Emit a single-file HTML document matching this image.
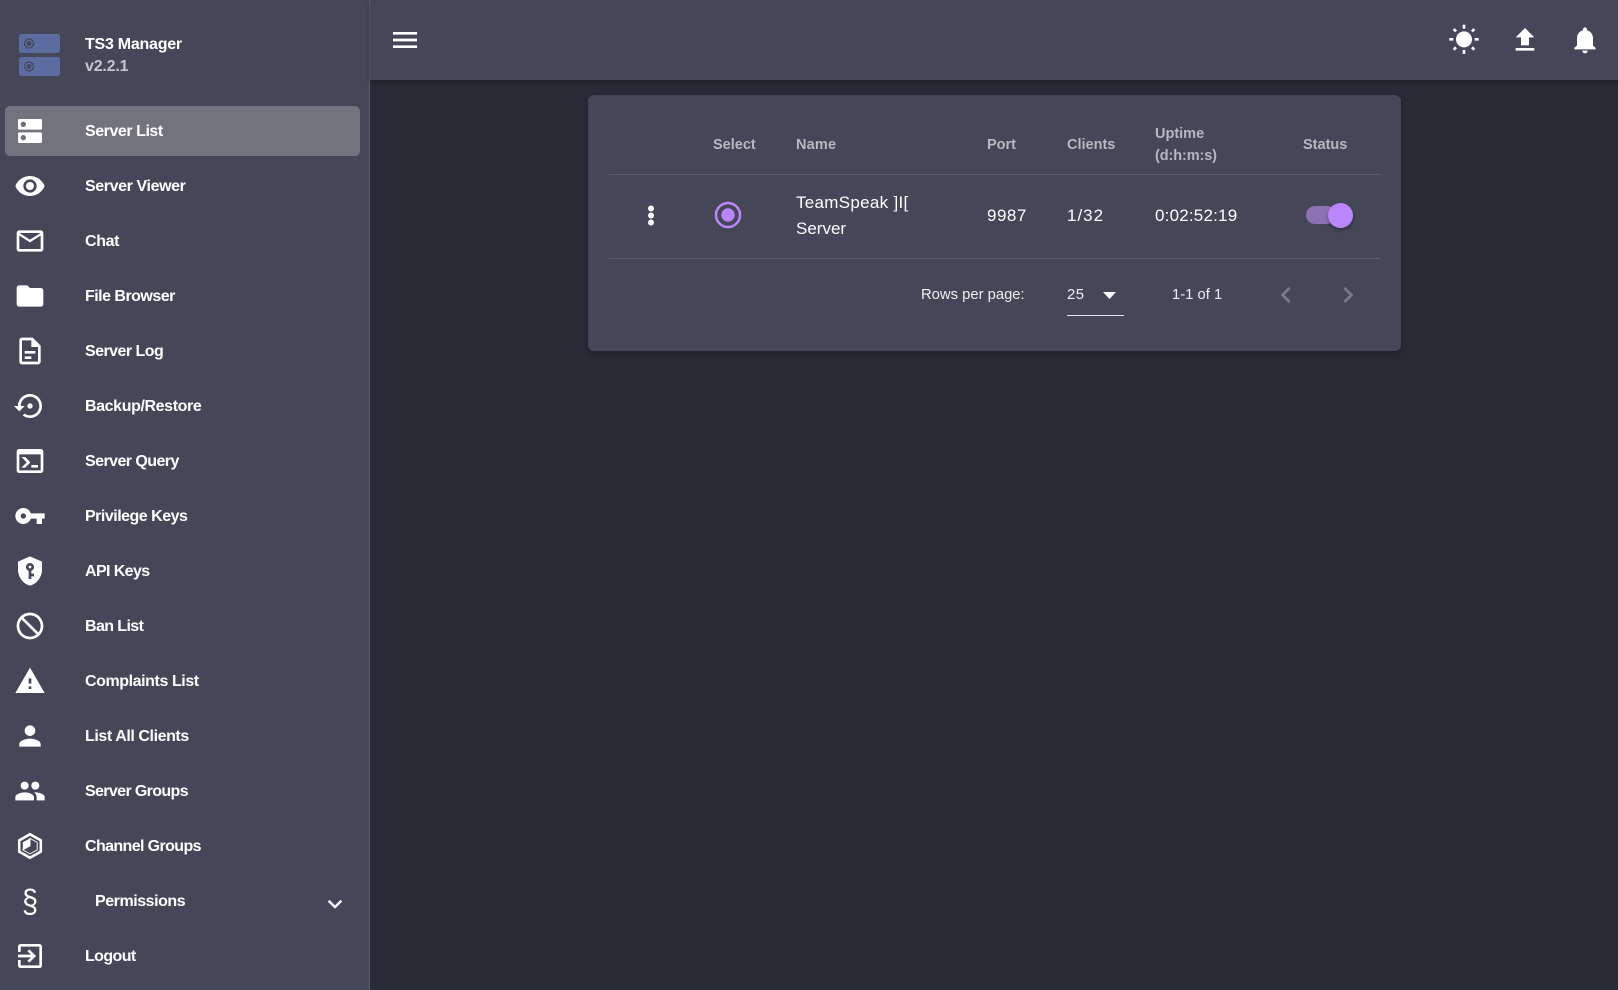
<!DOCTYPE html>
<html><head><meta charset="utf-8"><title>TS3 Manager</title>
<style>
html,body{margin:0;padding:0;width:1618px;height:990px;overflow:hidden;background:#282a36;font-family:"Liberation Sans",sans-serif;color:#fff}
.a{position:absolute;white-space:nowrap}
#side{position:absolute;left:0;top:0;width:369px;height:990px;background:#454759;border-right:1px solid #5a5c6c}
#bar{position:absolute;left:370px;top:0;width:1248px;height:80px;background:#454759;box-shadow:0 2px 4px rgba(0,0,0,.3)}
#sel{position:absolute;left:5px;top:106px;width:355px;height:50px;background:#72737f;border-radius:5px}
.n{position:absolute;left:85px;font-size:16px;font-weight:bold;letter-spacing:-.35px;line-height:20px;height:20px;white-space:nowrap}
svg.i{position:absolute;left:14px;width:32px;height:32px;fill:#fff}
svg.t{position:absolute;width:32px;height:32px;fill:#fff;top:24px}
#card{position:absolute;left:588px;top:95px;width:813px;height:256px;background:#454759;border-radius:6px;box-shadow:0 2px 6px rgba(0,0,0,.28)}
.h{font-size:14.5px;font-weight:bold;color:#b7b8bf;line-height:20px;position:absolute;white-space:nowrap}
.c{font-size:17px;color:#fff;line-height:26px;position:absolute;white-space:nowrap}
.f{font-size:14.8px;color:#eeeef0;line-height:20px;position:absolute;white-space:nowrap}
.l{position:absolute;left:609px;width:772px;height:1px;background:#5b5d6e}
</style></head><body>
<div id="side">
<svg class="a" style="left:19px;top:34px" width="42" height="42" viewBox="0 0 42 42">
<rect x="0" y="0" width="41" height="19" rx="2.5" fill="#5d6ca0"/><rect x="0" y="23" width="41" height="19" rx="2.5" fill="#5d6ca0"/>
<circle cx="10" cy="9.5" r="4.5" fill="none" stroke="#454759" stroke-width="1.2"/><circle cx="10" cy="9.5" r="2.4" fill="#454759"/>
<circle cx="10" cy="32.5" r="4.5" fill="none" stroke="#454759" stroke-width="1.2"/><circle cx="10" cy="32.5" r="2.4" fill="#454759"/></svg>
<div class="n" style="top:35px;letter-spacing:-.25px">TS3 Manager</div>
<div class="n" style="top:57px;color:#c4c5cc;letter-spacing:-.2px">v2.2.1</div>
<div id="sel"></div>

<svg class="i" style="top:115px" viewBox="0 0 24 24"><path d="M20 13H4c-.55 0-1 .45-1 1v6c0 .55.45 1 1 1h16c.55 0 1-.45 1-1v-6c0-.55-.45-1-1-1zM7 19c-1.1 0-2-.9-2-2s.9-2 2-2 2 .9 2 2-.9 2-2 2zM20 3H4c-.55 0-1 .45-1 1v6c0 .55.45 1 1 1h16c.55 0 1-.45 1-1V4c0-.55-.45-1-1-1zM7 9c-1.1 0-2-.9-2-2s.9-2 2-2 2 .9 2 2-.9 2-2 2z"/></svg>
<div class="n" style="top:122px;letter-spacing:-.45px">Server List</div>

<svg class="i" style="top:170px" viewBox="0 0 24 24"><path d="M12 4.5C7 4.5 2.73 7.61 1 12c1.73 4.39 6 7.5 11 7.5s9.27-3.11 11-7.5c-1.73-4.39-6-7.5-11-7.5zM12 17c-2.76 0-5-2.24-5-5s2.24-5 5-5 5 2.24 5 5-2.24 5-5 5zm0-8c-1.66 0-3 1.34-3 3s1.34 3 3 3 3-1.34 3-3-1.34-3-3-3z"/></svg>
<div class="n" style="top:177px;letter-spacing:-.39px">Server Viewer</div>

<svg class="i" style="top:225px" viewBox="0 0 24 24"><path d="M20 4H4c-1.1 0-1.99.9-1.99 2L2 18c0 1.1.9 2 2 2h16c1.1 0 2-.9 2-2V6c0-1.1-.9-2-2-2zm0 14H4V8l8 5 8-5v10zm-8-7L4 6h16l-8 5z"/></svg>
<div class="n" style="top:232px">Chat</div>

<svg class="i" style="top:280px" viewBox="0 0 24 24"><path d="M10 4H4c-1.1 0-1.99.9-1.99 2L2 18c0 1.1.9 2 2 2h16c1.1 0 2-.9 2-2V8c0-1.1-.9-2-2-2h-8l-2-2z"/></svg>
<div class="n" style="top:287px;letter-spacing:-.52px">File Browser</div>

<svg class="i" style="top:335px" viewBox="0 0 24 24"><path d="M14 2H6c-1.1 0-2 .9-2 2v16c0 1.1.89 2 1.99 2H18c1.1 0 2-.9 2-2V8l-6-6zm4 18H6V4h7v5h5v11zM8 12h8v2H8zm0 4h5v2H8z"/></svg>
<div class="n" style="top:342px;letter-spacing:-.54px">Server Log</div>

<svg class="i" style="top:390px" viewBox="0 0 24 24"><path d="M14 12c0-1.1-.9-2-2-2s-2 .9-2 2 .9 2 2 2 2-.9 2-2zm-2-9c-4.97 0-9 4.03-9 9H0l4 4 4-4H5c0-3.87 3.13-7 7-7s7 3.13 7 7-3.13 7-7 7c-1.51 0-2.91-.49-4.06-1.3l-1.42 1.44C8.04 20.3 9.94 21 12 21c4.97 0 9-4.03 9-9s-4.03-9-9-9z"/></svg>
<div class="n" style="top:397px;letter-spacing:-.39px">Backup/Restore</div>

<svg class="i" style="top:445px" viewBox="0 0 24 24"><path d="M20,19V7H4V19H20M20,3A2,2 0 0,1 22,5V19A2,2 0 0,1 20,21H4A2,2 0 0,1 2,19V5C2,3.89 2.9,3 4,3H20M13,17V15H18V17H13M9.58,13L5.57,9H8.4L11.7,12.3C12.09,12.69 12.09,13.33 11.7,13.72L8.42,17H5.59L9.58,13Z"/></svg>
<div class="n" style="top:452px;letter-spacing:-.56px">Server Query</div>

<svg class="i" style="top:500px" viewBox="0 0 24 24"><path d="M12.65 10C11.83 7.67 9.61 6 7 6c-3.31 0-6 2.69-6 6s2.69 6 6 6c2.61 0 4.83-1.67 5.65-4H17v4h4v-4h2v-4H12.65zM7 14c-1.1 0-2-.9-2-2s.9-2 2-2 2 .9 2 2-.9 2-2 2z"/></svg>
<div class="n" style="top:507px;letter-spacing:-.5px">Privilege Keys</div>

<svg class="i" style="top:555px" viewBox="0 0 24 24"><path d="M12,8A1,1 0 0,1 13,9A1,1 0 0,1 12,10A1,1 0 0,1 11,9A1,1 0 0,1 12,8M21,11C21,16.55 17.16,21.74 12,23C6.84,21.74 3,16.55 3,11V5L12,1L21,5V11M12,6A3,3 0 0,0 9,9C9,10.31 9.83,11.42 11,11.83V18H13V16H15V14H13V11.83C14.17,11.42 15,10.31 15,9A3,3 0 0,0 12,6Z"/></svg>
<div class="n" style="top:562px;letter-spacing:-.6px">API Keys</div>

<svg class="i" style="top:610px" viewBox="0 0 24 24"><path transform="translate(24 0) scale(-1 1)" d="M12 2C6.48 2 2 6.48 2 12s4.48 10 10 10 10-4.48 10-10S17.52 2 12 2zM4 12c0-4.42 3.58-8 8-8 1.85 0 3.55.63 4.9 1.69L5.69 16.9C4.63 15.55 4 13.85 4 12zm8 8c-1.85 0-3.55-.63-4.9-1.69L18.31 7.1C19.37 8.45 20 10.15 20 12c0 4.42-3.58 8-8 8z"/></svg>
<div class="n" style="top:617px;letter-spacing:-.6px">Ban List</div>

<svg class="i" style="top:665px" viewBox="0 0 24 24"><path d="M1 21h22L12 2 1 21zm12-3h-2v-2h2v2zm0-4h-2v-4h2v4z"/></svg>
<div class="n" style="top:672px;letter-spacing:-.42px">Complaints List</div>

<svg class="i" style="top:720px" viewBox="0 0 24 24"><path d="M12 12c2.21 0 4-1.79 4-4s-1.79-4-4-4-4 1.79-4 4 1.79 4 4 4zm0 2c-2.67 0-8 1.34-8 4v2h16v-2c0-2.66-5.33-4-8-4z"/></svg>
<div class="n" style="top:727px;letter-spacing:-.42px">List All Clients</div>

<svg class="i" style="top:775px" viewBox="0 0 24 24"><path d="M16 11c1.66 0 2.99-1.34 2.99-3S17.66 5 16 5c-1.66 0-3 1.34-3 3s1.34 3 3 3zm-8 0c1.66 0 2.99-1.34 2.99-3S9.66 5 8 5C6.34 5 5 6.34 5 8s1.34 3 3 3zm0 2c-2.33 0-7 1.17-7 3.5V19h14v-2.5c0-2.33-4.67-3.5-7-3.5zm8 0c-.29 0-.62.02-.97.05 1.16.84 1.97 1.97 1.97 3.45V19h6v-2.5c0-2.33-4.67-3.5-7-3.5z"/></svg>
<div class="n" style="top:782px;letter-spacing:-.63px">Server Groups</div>

<svg class="i" style="top:830px" viewBox="0 0 24 24"><path d="M12 3.2L20.1 7.8v8.4L12 20.8 3.9 16.2V7.8z" fill="none" stroke="#fff" stroke-width="1.9"/><path d="M12 6.3L6.6 9.3v5.6l5.4-3z"/><path d="M12 11.9L6.6 14.9l5.4 3 5.4-3V9.3L12 6.3z" fill="none" stroke="#fff" stroke-width=".7"/></svg>
<div class="n" style="top:837px;letter-spacing:-.61px">Channel Groups</div>

<div class="a" style="left:14px;width:32px;text-align:center;top:883px;font-size:32px;line-height:36px;font-family:'Liberation Sans',sans-serif;transform:scaleX(.9)">§</div>
<div class="n" style="top:892px;left:95px;letter-spacing:-.45px">Permissions</div>
<svg class="a" style="left:323px;top:892px;fill:#fff" width="24" height="24" viewBox="0 0 24 24"><path d="M7.41 8.59L12 13.17l4.59-4.58L18 10l-6 6-6-6z" transform="translate(12 12) scale(1.2) translate(-12 -12)"/></svg>

<svg class="i" style="top:940px" viewBox="0 0 24 24"><path d="M10.09 15.59L11.5 17l5-5-5-5-1.41 1.41L12.67 11H3v2h9.67l-2.58 2.59zM19 3H5c-1.11 0-2 .9-2 2v4h2V5h14v14H5v-4H3v4c0 1.1.89 2 2 2h14c1.1 0 2-.9 2-2V5c0-1.1-.9-2-2-2z"/></svg>
<div class="n" style="top:947px;letter-spacing:-.6px">Logout</div>
</div>

<div id="bar"></div>
<svg class="t" style="left:389px;top:23.5px" viewBox="0 0 24 24"><path d="M3 18h18v-2H3v2zm0-5h18v-2H3v2zm0-7v2h18V6H3z"/></svg>
<svg class="t" style="left:1448px" viewBox="0 0 24 24"><path d="M3.55,18.54L4.96,19.95L6.75,18.17L5.33,16.76M11,22.45C11.32,22.45 13,22.45 13,22.45V19.5H11M12,5.5A6,6 0 0,0 6,11.5A6,6 0 0,0 12,17.5A6,6 0 0,0 18,11.5C18,8.18 15.31,5.5 12,5.5M20,12.5H23V10.5H20M17.24,18.17L19.03,19.95L20.44,18.54L18.66,16.76M20.45,4.46L19.04,3.05L17.25,4.84L18.66,6.25M13,0.55H11V3.5H13M4,10.5H1V12.5H4M6.76,4.84L4.96,3.05L3.55,4.46L5.34,6.25L6.76,4.84Z"/></svg>
<svg class="t" style="left:1509px" viewBox="0 0 24 24"><path d="M9 16h6v-6h4l-7-7-7 7h4zm-4 2h14v2H5z"/></svg>
<svg class="t" style="left:1569px" viewBox="0 0 24 24"><path d="M12 22c1.1 0 2-.9 2-2h-4c0 1.1.89 2 2 2zm6-6v-5c0-3.07-1.64-5.64-4.5-6.32V4c0-.83-.67-1.5-1.5-1.5s-1.5.67-1.5 1.5v.68C7.63 5.36 6 7.92 6 11v5l-2 2v1h16v-1l-2-2z"/></svg>

<div id="card"></div>
<div class="h" style="left:713px;top:135px">Select</div>
<div class="h" style="left:796px;top:135px;letter-spacing:.2px">Name</div>
<div class="h" style="left:987px;top:135px">Port</div>
<div class="h" style="left:1067px;top:135px">Clients</div>
<div class="h" style="left:1155px;top:124px">Uptime</div>
<div class="h" style="left:1155px;top:146px;letter-spacing:-.1px">(d:h:m:s)</div>
<div class="h" style="left:1303px;top:135px">Status</div>
<div class="l" style="top:174px"></div>
<div class="l" style="top:258px"></div>

<svg class="a" style="left:645px;top:204px" width="12" height="24"><circle cx="6" cy="4.5" r="3" fill="#fff"/><circle cx="6" cy="11.5" r="3" fill="#fff"/><circle cx="6" cy="18.5" r="3" fill="#fff"/></svg>
<svg class="a" style="left:713px;top:200px" width="30" height="30"><circle cx="15" cy="15" r="12" fill="none" stroke="#bb86fc" stroke-width="2.5"/><circle cx="15" cy="15" r="6.7" fill="#bb86fc"/></svg>
<div class="c" style="left:796px;top:190px;letter-spacing:.3px">TeamSpeak ]I[</div>
<div class="c" style="left:796px;top:216px">Server</div>
<div class="c" style="left:987px;top:203px;letter-spacing:.5px">9987</div>
<div class="c" style="left:1067px;top:203px;letter-spacing:1px">1/32</div>
<div class="c" style="left:1155px;top:203px;letter-spacing:.2px">0:02:52:19</div>
<div class="a" style="left:1306px;top:206px;width:30px;height:18px;border-radius:9px;background:#8b72b2"></div>
<div class="a" style="left:1328px;top:203px;width:25px;height:25px;border-radius:50%;background:#bb86fc;box-shadow:0 2px 3px rgba(0,0,0,.35)"></div>

<div class="f" style="left:921px;top:285px">Rows per page:</div>
<div class="f" style="left:1067px;top:285px;letter-spacing:.5px">25</div>
<svg class="a" style="left:1102px;top:291px" width="15" height="9"><path d="M1 1h13L7.5 8z" fill="#fff"/></svg>
<div class="a" style="left:1067px;top:315px;width:57px;height:1px;background:#e4e4e8"></div>
<div class="f" style="left:1172px;top:285px">1-1 of 1</div>
<svg class="a" style="left:1270px;top:279px;fill:#7b7c8a" width="32" height="32" viewBox="0 0 24 24"><path d="M15.41 7.41L14 6l-6 6 6 6 1.41-1.41L10.83 12z"/></svg>
<svg class="a" style="left:1332px;top:279px;fill:#7b7c8a" width="32" height="32" viewBox="0 0 24 24"><path d="M10 6L8.59 7.41 13.17 12l-4.58 4.59L10 18l6-6z"/></svg>
</body></html>
